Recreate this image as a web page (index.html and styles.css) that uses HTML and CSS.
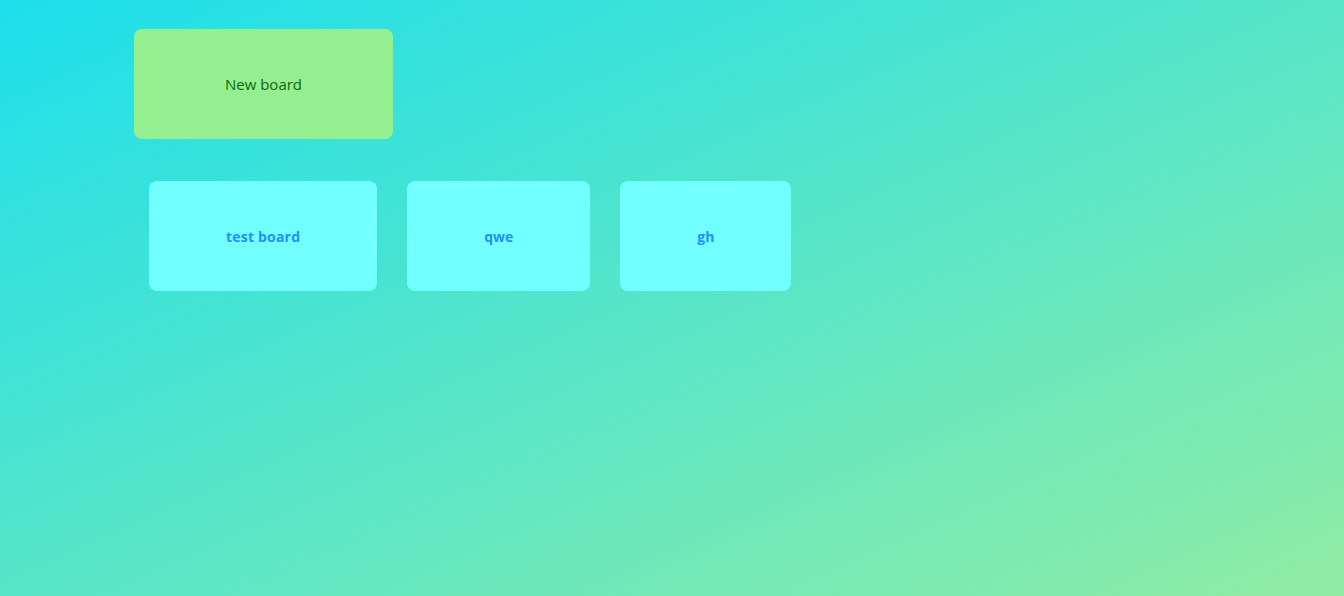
FILE: index.html
```html
<!DOCTYPE html>
<html>
<head>
<meta charset="utf-8">
<link rel="stylesheet" href="styles.css">
</head>
<body>
<main class="page">
  <div class="new-board">New board</div>
  <div class="boards">
    <div class="board">test board</div>
    <div class="board">qwe</div>
    <div class="board">gh</div>
  </div>
</main>
</body>
</html>
```
FILE: styles.css
```css
html, body {
  margin: 0;
  height: 100%;
}
body {
  background: linear-gradient(to bottom right, #1ddfec, #90eca4);
  font-family: "Open Sans", "Noto Sans", sans-serif;
}
.page {
  padding: 29px 0 0 134px;
  display: flex;
  flex-direction: column;
  align-items: flex-start;
}
.new-board {
  width: 259px;
  height: 110px;
  background: #93ef8f;
  color: #0b6a0b;
  border-radius: 8px;
  font-size: 15px;
  display: flex;
  align-items: center;
  justify-content: center;
}
.boards {
  display: flex;
  gap: 30px;
  margin-top: 42px;
  padding-left: 15px;
}
.board {
  height: 110px;
  padding: 0 77px;
  background: #72ffff;
  color: #1e90ff;
  font-weight: 700;
  font-size: 14px;
  border-radius: 8px;
  display: flex;
  align-items: center;
  justify-content: center;
}
.board:first-child {
  letter-spacing: 0.2px;
}
```
